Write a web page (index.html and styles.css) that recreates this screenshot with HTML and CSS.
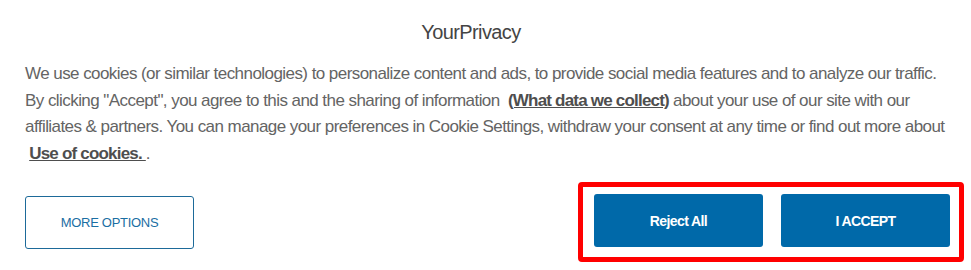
FILE: index.html
```html
<!DOCTYPE html>
<html>
<head>
<meta charset="utf-8">
<link rel="stylesheet" href="styles.css">
</head>
<body>
<div class="banner">
  <h2 class="title">YourPrivacy</h2>
  <p class="text">We use cookies (or similar technologies) to personalize content and ads, to provide social media features and to analyze our traffic.<br>By clicking "Accept", you agree to this and the sharing of information &nbsp;<a class="link" href="#">(What data we collect)</a> about your use of our site with our<br>affiliates &amp; partners. You can manage your preferences in Cookie Settings, withdraw your consent at any time or find out more about<br>&nbsp;<a class="link" href="#">Use of cookies.&nbsp;</a>.</p>
  <div class="actions">
    <button class="btn btn-outline">MORE OPTIONS</button>
    <div class="highlight">
      <button class="btn btn-solid">Reject All</button>
      <button class="btn btn-solid">I ACCEPT</button>
    </div>
  </div>
</div>
</body>
</html>
```
FILE: styles.css
```css
html, body {
  margin: 0;
  padding: 0;
  background: #ffffff;
}
.banner {
  width: 971px;
  box-sizing: border-box;
  padding: 18px 20px 0 25px;
  font-family: "Liberation Sans", Arial, sans-serif;
}
.title {
  margin: 0 34px 0 0;
  text-align: center;
  font-size: 20px;
  font-weight: normal;
  color: #444444;
  line-height: 28px;
  letter-spacing: -0.6px;
}
.text {
  margin: 15px 0 0 0;
  font-size: 17px;
  line-height: 26.5px;
  color: #646464;
  letter-spacing: -0.56px;
  white-space: nowrap;
}
.link {
  color: #4e4e4e;
  font-weight: bold;
  text-decoration: underline;
  letter-spacing: -0.8px;
}
.actions {
  display: flex;
  justify-content: space-between;
  align-items: center;
  margin-top: 15px;
}
.btn {
  width: 169px;
  height: 53px;
  border-radius: 3px;
  font-family: "Liberation Sans", Arial, sans-serif;
  cursor: pointer;
}
.btn-outline {
  background: #ffffff;
  border: 1px solid #1d6a99;
  color: #1a6ea3;
  font-size: 13px;
  letter-spacing: -0.3px;
}
.btn-solid {
  background: #0069a9;
  border: none;
  color: #ffffff;
  font-size: 14px;
  font-weight: bold;
  letter-spacing: -0.6px;
}
.highlight {
  display: flex;
  gap: 18px;
  padding: 7px 9px 10px 11px;
  border: 5px solid #ff0000;
  border-radius: 4px;
  margin-right: -13px;
}
```
